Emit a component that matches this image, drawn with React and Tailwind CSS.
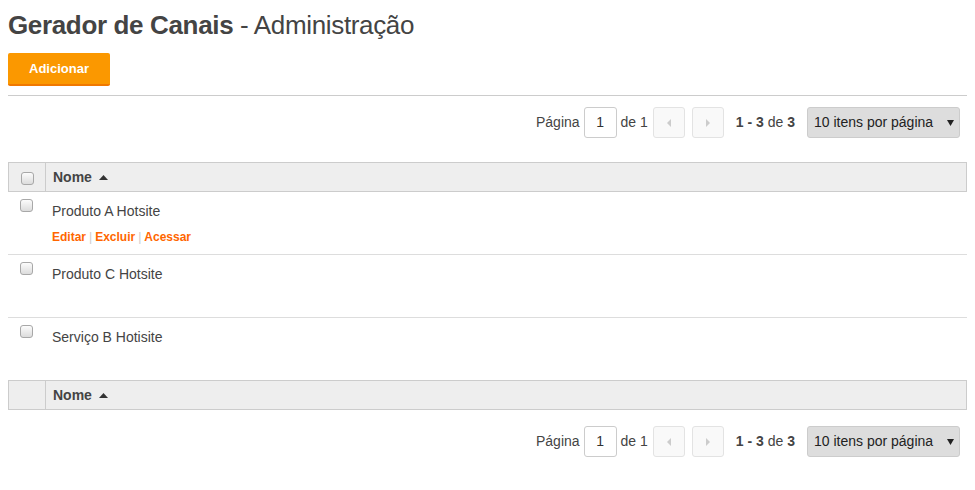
import { useState } from 'react';

const rows = [
    { id: 1, name: 'Produto A Hotsite', actions: true },
    { id: 2, name: 'Produto C Hotsite' },
    { id: 3, name: 'Serviço B Hotisite' },
];

const Check = () => (
    <span className="inline-block w-[13px] h-[13px] rounded-[3px] border border-[#a8a8a8] bg-gradient-to-b from-[#fcfcfc] to-[#dcdcdc]" />
);

const Pager = () => (
    <div className="flex justify-end items-center h-[31px] pr-[7px] text-[14px] text-[#444]">
        <span>Página</span>
        <span className="ml-[4px] w-[33px] h-[31px] border border-[#ccc] rounded-[3px] bg-white flex items-center justify-center text-[#333]">1</span>
        <span className="ml-[4px]">de 1</span>
        <span className="ml-[5px] w-[32px] h-[31px] border border-[#e3e3e3] rounded-[3px] bg-[#f9f9f9] flex items-center justify-center">
            <svg width="6" height="10" viewBox="0 0 6 10"><path d="M5 1 L1 5 L5 9 Z" fill="#ccc" /></svg>
        </span>
        <span className="ml-[7px] w-[32px] h-[31px] border border-[#e3e3e3] rounded-[3px] bg-[#f9f9f9] flex items-center justify-center">
            <svg width="6" height="10" viewBox="0 0 6 10"><path d="M1 1 L5 5 L1 9 Z" fill="#ccc" /></svg>
        </span>
        <span className="ml-[12px]"><b>1 - 3</b> de <b>3</b></span>
        <span className="ml-[12px] w-[153px] h-[31px] rounded-[3px] bg-[#ddd] border border-[#ccc] flex items-center justify-between pl-[6px] pr-[5px] text-[#222]">
            10 itens por página
            <svg width="7" height="6" viewBox="0 0 7 6"><path d="M0 0 L7 0 L3.5 6 Z" fill="#222" /></svg>
        </span>
    </div>
);

const HeadRow = ({ withCheck }) => (
    <div className="flex h-[30px] bg-[#eee] border-t border-b border-[#ccc] border-x">
        <div className="w-[37px] border-r border-[#ccc] flex items-center justify-center pt-[2px]">
            {withCheck && <Check />}
        </div>
        <div className="flex items-center pl-[7px] font-bold text-[14px] text-[#444]">
            Nome
            <svg className="ml-[7px]" width="9" height="5" viewBox="0 0 9 5"><path d="M0 5 L4.5 0 L9 5 Z" fill="#333" /></svg>
        </div>
    </div>
);

const App = () => {
    const [hover] = useState(null);

    return (
        <div className="min-h-screen bg-white px-[8px] font-['Liberation_Sans',Arial,sans-serif] text-[#444]">
            <h1 className="pt-[9px] text-[26px] leading-[32px] tracking-[-0.35px]">
                <span className="font-bold">Gerador de Canais</span> - Administração
            </h1>

            <div className="mt-[12px]">
                <button className="w-[102px] h-[33px] rounded-[2px] bg-[#fb9800] border-b-[2px] border-[#f07800] text-white font-bold text-[13px]">
                    Adicionar
                </button>
            </div>

            <div className="mt-[9px] border-t border-[#ccc]" />

            <div className="mt-[11px]">
                <Pager />
            </div>

            <div className="mt-[24px]">
                <HeadRow withCheck />
                {rows.map((r, i) => (
                    <div key={r.id} className={`flex ${i < rows.length - 1 ? 'h-[63px] border-b border-[#ddd]' : 'h-[62px]'}`}>
                        <div className="w-[37px] flex justify-center pt-[7px] pr-[1px]">
                            <Check />
                        </div>
                        <div className="pl-[7px] pt-[10px]">
                            <div className="text-[14px] leading-[18px] text-[#444]">{r.name}</div>
                            {r.actions && (
                                <div className="mt-[8px] text-[12px] font-bold text-[#f60] flex items-center">
                                    <a href="#" className={hover ? 'underline' : ''}>Editar</a>
                                    <span className="mx-[3px] text-[#ccc] font-normal">|</span>
                                    <a href="#">Excluir</a>
                                    <span className="mx-[3px] text-[#ccc] font-normal">|</span>
                                    <a href="#">Acessar</a>
                                </div>
                            )}
                        </div>
                    </div>
                ))}
                <HeadRow />
            </div>

            <div className="mt-[16px]">
                <Pager />
            </div>
        </div>
    );
};

export default App;
